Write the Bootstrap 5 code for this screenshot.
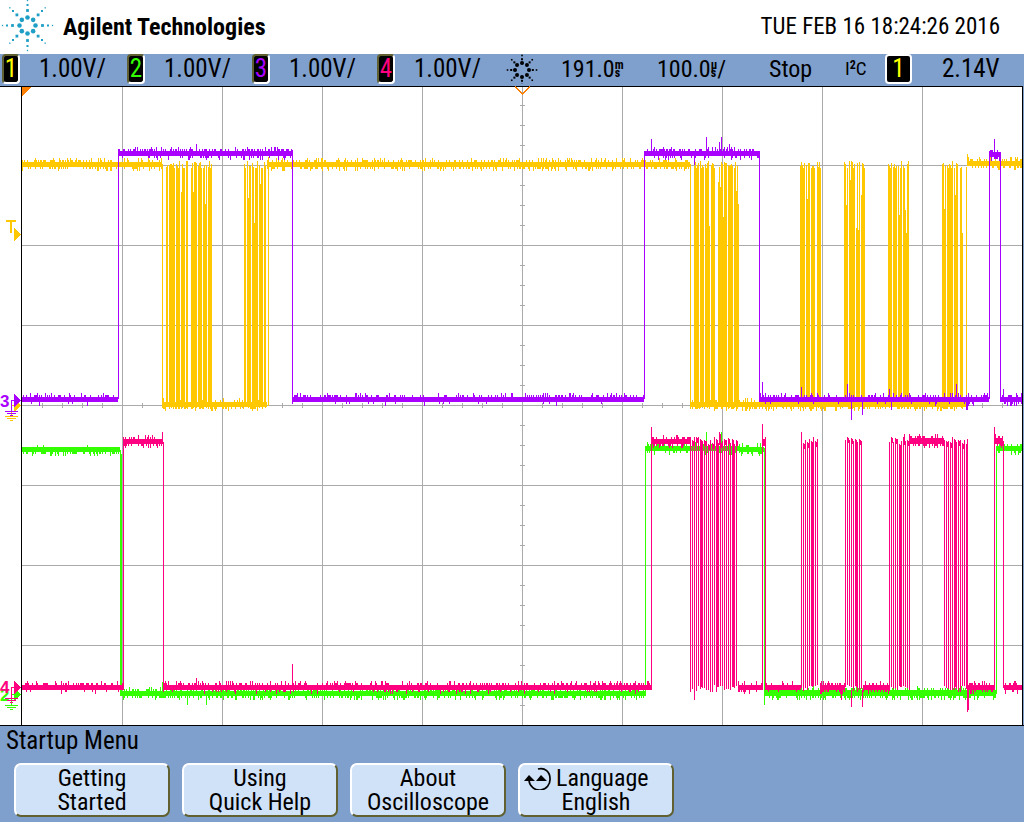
<!DOCTYPE html>
<html lang="en">
<head>
<meta charset="utf-8">
<meta name="viewport" content="width=device-width, initial-scale=1">
<title>Oscilloscope</title>
<link href="https://cdn.jsdelivr.net/npm/bootstrap@5.3.0/dist/css/bootstrap.min.css" rel="stylesheet">
<script src="https://cdn.jsdelivr.net/npm/bootstrap@5.3.0/dist/js/bootstrap.bundle.min.js"></script>
<style>
  :root { --panel: #7f9fcd; --key: #d0e2f8; --shade: #606030; }
  body { font-family: "Roboto Condensed", "Liberation Sans Narrow", Roboto, sans-serif; font-size: 24px; line-height: 24px; color: #000; background: var(--panel); }
  .topbar { height: 54px; }
  .maker { font-weight: 700; }
  .clock { font-size: 23px; }
  .status { display: grid; height: 32px; padding-bottom: 2px; font-size: 25px; background: var(--panel);
    grid-template-columns: repeat(4, minmax(0, 125fr)) minmax(0, 61fr) minmax(0, 96fr) minmax(0, 112fr) minmax(0, 76fr) minmax(0, 40fr) minmax(0, 57fr) minmax(0, 82fr); }
  .chan { width: 18px; height: 30px; margin-left: 2px; margin-right: 19px; background: #000; border: 2px solid; border-color: var(--shade) #fff #fff var(--shade); border-radius: 4px; }
  .source { width: 27px; height: 30px; background: #000; color: #ff0; border: 2px solid #fff; border-radius: 4px; }
  .c1 { color: #ff0; } .c2 { color: #3f0; } .c3 { color: #a0f; } .c4 { color: #ff0080; }
  .unit { font-size: 12px; line-height: 8px; font-weight: 700; }
  .timing { font-size: 24px; }
  .bus { font-size: 19px; }
  .bus sup { font-size: 12px; font-weight: 700; top: -6px; }
  .menu-title { font-size: 25px; line-height: 24px; padding: 3px 6px 10px; }
  .softkeys { grid-template-columns: repeat(6, minmax(0, 1fr)); gap: 12px; padding: 0 14px 4px; }
  .softkey { height: 54px; padding: 0; font: inherit; color: #000; background: var(--key); border: 2px solid; border-color: #fff var(--shade) var(--shade) #fff; border-radius: 7px; }
</style>
</head>
<body>
<header class="topbar bg-white d-flex align-items-center justify-content-between">
  <div class="d-flex align-items-center">
    <svg id="logo" class="me-2" width="55" height="54" viewBox="0 -2 55 54" fill="#1f9fc5" aria-hidden="true"></svg>
    <span class="maker">Agilent Technologies</span>
  </div>
  <time class="clock pe-4" datetime="2016-02-16T18:24:26">TUE FEB 16 18:24:26 2016</time>
</header>

<section class="status align-items-center" aria-label="Status">
  <div class="d-flex align-items-center"><span class="chan c1 d-flex align-items-center justify-content-center">1</span>1.00V/</div>
  <div class="d-flex align-items-center"><span class="chan c2 d-flex align-items-center justify-content-center">2</span>1.00V/</div>
  <div class="d-flex align-items-center"><span class="chan c3 d-flex align-items-center justify-content-center">3</span>1.00V/</div>
  <div class="d-flex align-items-center"><span class="chan c4 d-flex align-items-center justify-content-center">4</span>1.00V/</div>
  <div><svg id="acq" class="d-block ms-1" width="36" height="30" viewBox="0 0 36 30" aria-hidden="true"></svg></div>
  <div class="timing d-flex align-items-center">191.0<span class="unit d-flex flex-column"><span>m</span><span>s</span></span></div>
  <div class="timing d-flex align-items-center">100.0<span class="unit d-flex flex-column"><span>µ</span><span>s</span></span>/</div>
  <div class="timing">Stop</div>
  <div class="bus">I<sup>2</sup>C</div>
  <div><span class="source d-flex align-items-center justify-content-center">1</span></div>
  <div>2.14V</div>
</section>

<main>
  <svg id="scope" class="d-block w-100 bg-white" viewBox="0 86 1024 640" shape-rendering="crispEdges" role="img" aria-label="Waveform display"></svg>
</main>

<footer>
  <h1 class="menu-title fw-normal mb-0">Startup Menu</h1>
  <nav class="softkeys d-grid" aria-label="Startup Menu">
    <button type="button" class="softkey">Getting<br>Started</button>
    <button type="button" class="softkey">Using<br>Quick Help</button>
    <button type="button" class="softkey">About<br>Oscilloscope</button>
    <button type="button" class="softkey">
      <span class="d-flex align-items-center ps-1"><svg width="28" height="24" viewBox="0 0 28 24" class="flex-shrink-0 me-1" aria-hidden="true"><path d="M14 3C21 1 26 6 26 12.500a10.500 10.500 0 0 1-21 2V13" fill="none" stroke="#000" stroke-width="1.700"/><path d="M0 15l5-6 6 6zM12 15l5-6 6 6z"/></svg>Language</span>
      <span class="d-block">English</span>
    </button>
  </nav>
</footer>

<script>
// Eight spokes of dots around a centre
function burst(id, cx, cy, dots) {
  let s = '';
  for (let k = 0; k < 8; k++) for (const [r, w] of dots) {
    const x = cx + r * Math.cos(k * Math.PI / 4), y = cy + r * Math.sin(k * Math.PI / 4);
    s += r < 9 ? `<circle cx="${x}" cy="${y}" r="${w / 2}"/>` : `<rect x="${x - w / 2}" y="${y - w / 2}" width="${w}" height="${w}"/>`;
  }
  document.getElementById(id).innerHTML = s;
}
burst('logo', 27.5, 23.5, [[8, 4.6], [15, 2.8], [20.5, 2], [25, 1.3]]);
burst('acq', 18, 16, [[7, 4], [10.8, 2], [14.5, 1.6]]);

const Y = '#ffc800', G = '#33ff00', P = '#aa00ff', R = '#ff0080';
let seed = 7;
const rnd = () => (seed = (seed * 16807) % 2147483647) / 2147483647;
const path = (d, c, extra = '') => `<path d="${d}" stroke="${c}" fill="none" ${extra}/>`;
const col = (x, a, b) => `M${x + .5} ${a}V${b}`;

// noisy level between two times
function level(x0, x1, a, b, up = .4, down = .4) {
  let d = '';
  for (let x = x0; x < x1; x++) {
    let t = a, u = b + 1;
    if (rnd() < up) t -= rnd() < .25 ? 4 : 2;
    if (rnd() < down) u += rnd() < .25 ? 4 : 2;
    d += col(x, t, u);
  }
  return d;
}
const edges = list => list.map(([x, a, b]) => col(x, a, b)).join('');
// packed data bits, drawn as solid blocks with ragged tops
function blocks(list) {
  let d = '';
  for (const [a, b] of list) for (let x = a; x < b; x++) {
    const q = rnd();
    d += col(x, q < .12 ? 175 + rnd() * 60 : q < .3 ? 168 : 161 + rnd() * 6, 404 + rnd() * 5);
  }
  return d;
}
// separate clock pulses, some joined at the top
function pulses(x0, x1) {
  let d = '', i = 0;
  for (let x = x0; x <= x1; x += 2, i++) {
    const t = 437 + Math.floor(rnd() * 8);
    d += col(x, t, 685 + rnd() * 7);
    if (i % 2) d += col(x + 1, t + 1, t + 6);
    if (i % 8 === 5) d += col(x + 1, t + 4, 687);
  }
  return d;
}

let s = '', g = '';
for (let x = 122; x < 1022; x += 100) g += `M${x + .5} 87V725`;
for (let y = 165; y < 725; y += 80) g += `M22 ${y + .5}H1022`;
for (let x = 42; x < 1022; x += 20) g += `M${x + .5} 403V408`;
for (let y = 105; y < 725; y += 20) g += `M520 ${y + .5}H525`;
s += path(g, '#aaa');

s += path(
  level(22, 162, 162, 166) + level(162, 267, 402, 406) + level(267, 690, 162, 166) +
  level(690, 967, 402, 406) + level(967, 1022, 161, 165) +
  edges([[162, 164, 408], [268, 157, 406], [690, 164, 408], [966, 167, 410], [967, 154, 164]]) +
  blocks([[166,168],[169,175],[176,180],[181,185],[186,188],[191,197],[198,202],[203,207],[208,212],
    [244,246],[247,251],[252,258],[259,263],[264,266],
    [694,699],[700,704],[705,710],[711,715],[718,727],[728,733],[734,739],
    [800,805],[806,810],[811,815],[817,821],[844,848],[849,855],[856,860],[861,865],
    [888,892],[893,897],[898,902],[903,909],[942,946],[947,953],[954,958],[960,963]]), Y);
s += path(
  level(22, 118, 397, 401, .35, .05) + level(118, 292, 151, 155, .45, .25) + level(292, 644, 397, 401, .35, .05) +
  level(644, 759, 151, 155, .45, .25) + level(759, 989, 397, 401, .35, .1) + level(989, 1000, 152, 156) + level(1000, 1022, 397, 401) +
  edges([[118,153,399],[292,150,399],[644,151,399],[759,151,399],[989,151,399],[1000,152,399],
    [196,144,150],[651,139,152],[694,152,165],[706,137,152],[719,142,152],[721,137,152],[729,144,152],[994,139,152],
    [762,382,398],[801,387,398],[847,384,398],[851,400,420],[862,400,415],[889,389,398],[891,400,410],[956,384,398],[966,400,410],[967,400,410],[1003,389,398]]), P);
s += path(
  level(22, 120, 447, 451, .05, .4) + level(120, 646, 691, 695) + level(646, 740, 446, 450) +
  level(740, 764, 447, 451, .2) + level(764, 996, 690, 695) + level(997, 1022, 446, 450) +
  edges([[120,450,696],[121,454,692],[645,446,695],[764,448,705],[996,446,694],
    [187,694,705],[206,694,705],[162,682,692],[706,432,448],[721,432,448]]), G);
s += path(
  level(22, 123, 685, 689, .4, .1) + level(123, 163, 439, 443) + level(163, 651, 685, 689, .4, .15) +
  level(651, 690, 439, 443) + level(738, 762, 685, 689) + level(762, 766, 439, 445) + level(766, 801, 685, 689, .3, .1) +
  level(820, 845, 685, 689) + level(863, 889, 685, 689) + level(909, 944, 438, 443) + level(968, 994, 685, 689) +
  level(994, 1003, 438, 443) + level(1004, 1022, 685, 689) +
  pulses(690, 737) + pulses(801, 818) + pulses(845, 862) + pulses(889, 909) + pulses(944, 966) +
  edges([[123,441,690],[162,432,444],[163,442,688],[651,427,690],[762,424,690],[765,439,690],[967,439,712],[968,690,710],
    [994,427,690],[1003,441,688],[292,664,688],[196,678,688],[801,432,445],[904,434,445],[719,432,445],[720,434,445],
    [694,690,700],[841,690,700],[851,690,707],[862,690,707]]), R);

// graticule frame
s += path('M0 86.5H1023M21.5 87V725M1022.5 87V725M0 725.5H1024', '#000') + path('M1023.5 86V725', '#7f9fcd');
// trigger time markers
s += '<path d="M22 87H31L22 96z" fill="#ff8000"/>' + path('M515 87L522.5 94L530 87', '#ff8000', 'stroke-width="1.5"');

const arrow = (y, c) => `<path d="M14 ${y - 6}L21.5 ${y + .5}L14 ${y + 7}z" fill="${c}"/>`;
const ground = (y, top, c) => path(`M11.5 ${y}V${top}M11 ${top + .5}H15M5 ${y + .5}H18M7 ${y + 2.5}H16M10 ${y + 4.5}H13`, c);
const label = (x, y, t, c) => `<text x="${x}" y="${y}" fill="${c}" font-size="17" font-weight="700" font-family="Liberation Sans, sans-serif">${t}</text>`;
s += path('M6 221H16M11 220V233', Y, 'stroke-width="2"') + arrow(234, Y);
s += arrow(405, Y) + ground(416, 405, Y) + arrow(400, P) + ground(411, 400, P) + label(0, 407, '3', P);
s += arrow(694, G) + label(0, 701, '2', G) + ground(705, 694, G) + arrow(687, R) + ground(698, 687, R) + label(0, 693, '4', R);
document.getElementById('scope').innerHTML = s;
</script>
</body>
</html>
